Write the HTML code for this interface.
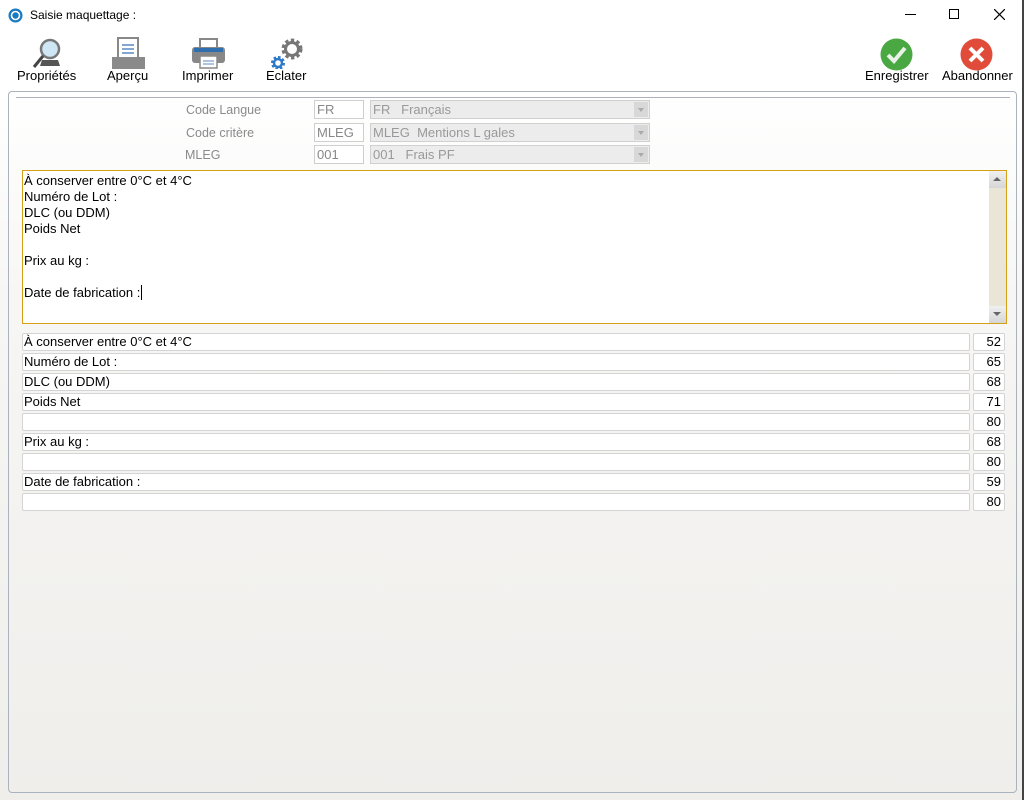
<!DOCTYPE html>
<html><head><meta charset="utf-8"><style>
*{margin:0;padding:0;box-sizing:border-box}
body{width:1024px;height:800px;overflow:hidden;background:#fff;font-family:"Liberation Sans",Arial,sans-serif;font-size:13px;color:#000;position:relative}
.abs{position:absolute}
.win{position:absolute;left:0;top:0;width:1024px;height:800px;border-right:2px solid #444;background:linear-gradient(#fff 0,#fff 90px,#f7f6f4 300px,#efeeeb 800px)}
.tb{position:absolute;top:68px;font-size:13px;text-align:center}
.panel{position:absolute;left:8px;top:91px;width:1009px;height:702px;border:1px solid #a9b2bd;border-radius:4px}
.lbl{position:absolute;color:#8a8a8a;font-size:12.5px}
.box{position:absolute;border:1px solid #cfcfcf;background:#fff;color:#888;padding-left:2px;font-size:13px;line-height:17px;height:19px}
.cmb{position:absolute;border:1px solid #d0d0d0;background:#ececec;color:#999;padding-left:2px;font-size:13px;line-height:17px;height:19px}
.cmb i{position:absolute;right:1px;top:1px;width:14px;height:15px;background:#d8d8d8;font-style:normal}
.cmb i:after{content:"";position:absolute;left:4px;top:6px;border-left:3px solid transparent;border-right:3px solid transparent;border-top:4px solid #aaa}
.row{position:absolute;left:22px;width:948px;height:18px;border:1px solid #d4d4d4;border-radius:2px;background:#fff;padding-left:1px;line-height:16px}
.num{position:absolute;left:973px;width:32px;height:18px;border:1px solid #d4d4d4;border-radius:2px;background:#fff;text-align:right;padding-right:3px;line-height:16px}
</style></head><body>
<div class="win">
<svg class="abs" style="left:8px;top:8px" width="15" height="15"><circle cx="7.5" cy="7.5" r="7" fill="#1a7ac0"/><circle cx="7.5" cy="7.5" r="4" fill="none" stroke="#fff" stroke-width="1.6"/></svg>
<div class="abs" style="left:30px;top:8px;font-size:12px">Saisie maquettage :</div>
<div class="abs" style="left:905px;top:14px;width:11px;height:1px;background:#000"></div>
<div class="abs" style="left:949px;top:9px;width:10px;height:10px;border:1px solid #000"></div>
<svg class="abs" style="left:994px;top:9px" width="11" height="11"><path d="M0 0L11 11M11 0L0 11" stroke="#000" stroke-width="1.2"/></svg>
<svg class="abs" style="left:32px;top:37px" width="34" height="32"><circle cx="18" cy="12" r="9" fill="#cfe6f5" stroke="#777" stroke-width="2.5"/><path d="M11 19L2 30" stroke="#444" stroke-width="3"/><path d="M10 23h16l2 6H8z" fill="#555"/></svg>
<svg class="abs" style="left:111px;top:37px" width="34" height="32"><rect x="7" y="1" width="20" height="24" fill="#fff" stroke="#888" stroke-width="2"/><path d="M11 8h12M11 12h12M11 16h12" stroke="#5a8ac0" stroke-width="1.5"/><rect x="1" y="20" width="33" height="12" fill="#8a8a8a"/></svg>
<svg class="abs" style="left:191px;top:37px" width="34" height="32"><rect x="9" y="2" width="17" height="10" fill="#fff" stroke="#888" stroke-width="2"/><rect x="1" y="10" width="33" height="16" rx="3" fill="#888"/><rect x="3" y="11" width="29" height="4" fill="#2f6fb0"/><rect x="9" y="19" width="17" height="12" fill="#fff" stroke="#888" stroke-width="1.5"/><path d="M12 24h11M12 27h11" stroke="#5a8ac0"/></svg>
<svg class="abs" style="left:270px;top:37px" width="36" height="32"><g transform="translate(22 12)"><circle r="8" fill="none" stroke="#777" stroke-width="5" stroke-dasharray="3 2.2"/><circle r="6.5" fill="none" stroke="#777" stroke-width="3"/></g><g transform="translate(8 26)"><circle r="5" fill="none" stroke="#2f7ac8" stroke-width="4" stroke-dasharray="2.2 1.7"/><circle r="4" fill="none" stroke="#2f7ac8" stroke-width="2.5"/></g></svg>
<div class="tb" style="left:17px">Propriétés</div>
<div class="tb" style="left:107px">Aperçu</div>
<div class="tb" style="left:182px">Imprimer</div>
<div class="tb" style="left:266px">Eclater</div>
<svg class="abs" style="left:880px;top:38px" width="33" height="33"><circle cx="16.5" cy="16.5" r="16" fill="#4aa842"/><path d="M8 17l6 6 11-13" fill="none" stroke="#e8f2e6" stroke-width="4"/></svg>
<svg class="abs" style="left:960px;top:38px" width="33" height="33"><circle cx="16.5" cy="16.5" r="16" fill="#e04b3a"/><path d="M10 10l13 13M23 10l-13 13" stroke="#fff" stroke-width="4"/></svg>
<div class="tb" style="left:865px">Enregistrer</div>
<div class="tb" style="left:942px">Abandonner</div>

<div class="panel"></div>
<div class="abs" style="left:16px;top:97px;width:994px;height:1px;background:#a9b2bd"></div>

<div class="lbl" style="left:186px;top:103px">Code Langue</div>
<div class="lbl" style="left:186px;top:126px">Code critère</div>
<div class="lbl" style="left:185px;top:148px">MLEG</div>
<div class="box" style="left:314px;top:100px;width:50px">FR</div>
<div class="box" style="left:314px;top:123px;width:50px">MLEG</div>
<div class="box" style="left:314px;top:145px;width:50px">001</div>
<div class="cmb" style="left:370px;top:100px;width:280px">FR &nbsp;&nbsp;Français<i></i></div>
<div class="cmb" style="left:370px;top:123px;width:280px">MLEG &nbsp;Mentions L gales<i></i></div>
<div class="cmb" style="left:370px;top:145px;width:280px">001 &nbsp;&nbsp;Frais PF<i></i></div>

<div class="abs" style="left:22px;top:170px;width:985px;height:154px;border:1px solid #d4a017;background:#fff;padding:2px 0 0 1px;line-height:16px">À conserver entre 0°C et 4°C<br>Numéro de Lot :<br>DLC (ou DDM)<br>Poids Net<br><br>Prix au kg :<br><br>Date de fabrication :<span style="border-left:1px solid #000;margin-left:1px"></span>
<div class="abs" style="right:0;top:0;width:17px;height:152px;background:#e9e6d8"></div>
<div class="abs" style="right:0;top:0;width:17px;height:17px;background:linear-gradient(#f0f0f0,#d6d6d6)"><div style="margin:6px 0 0 4px;border-left:4px solid transparent;border-right:4px solid transparent;border-bottom:4px solid #666;width:0"></div></div>
<div class="abs" style="right:0;bottom:0;width:17px;height:17px;background:linear-gradient(#f0f0f0,#d6d6d6)"><div style="margin:6px 0 0 4px;border-left:4px solid transparent;border-right:4px solid transparent;border-top:4px solid #666;width:0"></div></div>
</div>

<div class="row" style="top:333px">À conserver entre 0°C et 4°C</div><div class="num" style="top:333px">52</div>
<div class="row" style="top:353px">Numéro de Lot :</div><div class="num" style="top:353px">65</div>
<div class="row" style="top:373px">DLC (ou DDM)</div><div class="num" style="top:373px">68</div>
<div class="row" style="top:393px">Poids Net</div><div class="num" style="top:393px">71</div>
<div class="row" style="top:413px"></div><div class="num" style="top:413px">80</div>
<div class="row" style="top:433px">Prix au kg :</div><div class="num" style="top:433px">68</div>
<div class="row" style="top:453px"></div><div class="num" style="top:453px">80</div>
<div class="row" style="top:473px">Date de fabrication :</div><div class="num" style="top:473px">59</div>
<div class="row" style="top:493px"></div><div class="num" style="top:493px">80</div>
</div>
</body></html>
